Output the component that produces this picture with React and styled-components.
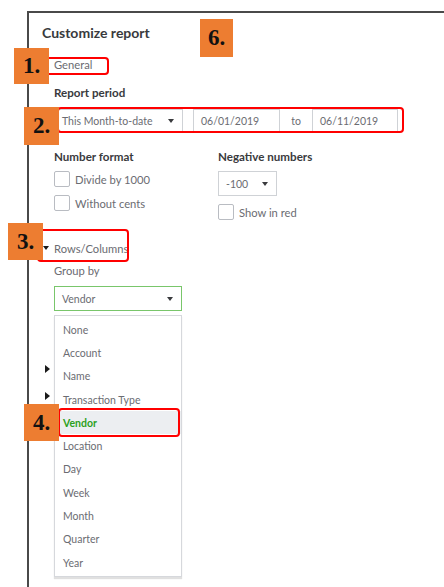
import React from "react";
import styled, { createGlobalStyle } from "styled-components";

const GlobalStyle = createGlobalStyle`
  body {
    margin: 0;
    background: #fff;
    font-family: Lato, "Noto Sans", sans-serif;
  }
`;

const Root = styled.div`
  position: relative;
  width: 444px;
  height: 587px;
  overflow: hidden;
  background: #fff;
`;

const Frame = styled.div`
  margin: 11px 0 0 27px;
  height: 576px;
  box-sizing: border-box;
  border-top: 2px solid #4a4a4a;
  border-left: 2px solid #4a4a4a;
  padding-left: 13px;
`;

const Title = styled.div`
  margin-top: 12px;
  font-size: 14px;
  line-height: 16px;
  font-weight: 700;
  color: #393a3d;
`;

const SectionHeader = styled.div`
  display: flex;
  align-items: center;
  height: 16px;
  margin-top: ${(p) => p.$gap}px;
  font-size: 11.2px;
  color: #6b6c72;
`;

const Marker = styled.span`
  width: 12px;
  height: 16px;
  display: flex;
  align-items: center;
  justify-content: ${(p) => (p.$kind === "dot" ? "flex-end" : "flex-start")};
  padding-left: 1px;
  box-sizing: border-box;

  &::before {
    content: "";
    display: block;
    ${(p) =>
      p.$kind === "dot"
        ? `width: 2px; height: 2px; background: #9a9ca1; margin-right: 5px;`
        : p.$kind === "down"
        ? `border-left: 3px solid transparent; border-right: 3px solid transparent; border-top: 4px solid #1a1a1a;`
        : `border-top: 4px solid transparent; border-bottom: 4px solid transparent; border-left: 5px solid #1a1a1a; margin-left: 2px;`}
  }
`;

const Body = styled.div`
  padding-left: 12px;
`;

const Label = styled.div`
  margin-top: ${(p) => p.$gap}px;
  font-size: ${(p) => (p.$bold ? 11.6 : 11.2)}px;
  line-height: 16px;
  font-weight: ${(p) => (p.$bold ? 700 : 400)};
  color: ${(p) => (p.$bold ? "#393a3d" : "#6b6c72")};
  white-space: nowrap;
`;

const FieldRow = styled.div`
  display: flex;
  height: 24px;
  margin-top: 8px;
`;

const Field = styled.div`
  box-sizing: border-box;
  width: ${(p) => p.$w}px;
  height: ${(p) => p.$h || 24}px;
  margin-top: ${(p) => p.$gap || 0}px;
  margin-left: ${(p) => p.$ml || 0}px;
  border: 1px solid ${(p) => (p.$active ? "#79c66b" : "#cfd2d6")};
  padding: 0 8px 0 7px;
  display: flex;
  align-items: center;
  justify-content: space-between;
  font-size: 10.5px;
  color: #6b6c72;
  background: #fff;
`;

const Arrow = styled.span`
  border-left: 3.5px solid transparent;
  border-right: 3.5px solid transparent;
  border-top: 4px solid #393a3d;
`;

const To = styled.div`
  width: 32px;
  display: flex;
  align-items: center;
  justify-content: center;
  font-size: 10.5px;
  color: #6b6c72;
`;

const Columns = styled.div`
  display: grid;
  grid-template-columns: 164px auto;
  align-items: start;
`;

const Column = styled.div`
  display: flex;
  flex-direction: column;
  align-items: flex-start;
`;

const CheckRow = styled.label`
  display: flex;
  align-items: center;
  gap: 5px;
  height: 16px;
  margin-top: ${(p) => p.$gap}px;
  font-size: 11.2px;
  color: #6b6c72;
`;

const Box = styled.span`
  width: 16px;
  height: 16px;
  box-sizing: border-box;
  border: 1px solid #b9bcc2;
  border-radius: 2px;
  background: #fff;
`;

const SelectWrap = styled.div`
  position: relative;
  width: 128px;
  margin-top: 7px;
`;

const Menu = styled.ul`
  position: absolute;
  top: calc(100% + 4px);
  left: 0;
  z-index: 2;
  width: 128px;
  margin: 0;
  padding: 2px 0;
  box-sizing: border-box;
  list-style: none;
  background: #fff;
  border: 1px solid #d6d8dc;
  box-shadow: 0 2px 1px rgba(0, 0, 0, 0.12);
`;

const MenuItem = styled.li`
  height: 23.3px;
  display: flex;
  align-items: center;
  padding-left: 8px;
  font-size: 10.5px;
  font-weight: ${(p) => (p.$selected ? 700 : 400)};
  color: ${(p) => (p.$selected ? "#2ca01c" : "#6b6c72")};
  background: ${(p) => (p.$selected ? "#eceef1" : "transparent")};
`;

const Badge = styled.div`
  position: absolute;
  left: ${(p) => p.$x}px;
  top: ${(p) => p.$y}px;
  width: ${(p) => p.$w || 35}px;
  height: ${(p) => p.$h || 37}px;
  z-index: 5;
  background: #ed7d31;
  display: flex;
  align-items: center;
  justify-content: center;
  font-family: "Liberation Serif", serif;
  font-weight: 700;
  font-size: 23px;
  color: #111;
`;

const Highlight = styled.div`
  position: absolute;
  left: ${(p) => p.$x}px;
  top: ${(p) => p.$y}px;
  width: ${(p) => p.$w}px;
  height: ${(p) => p.$h}px;
  z-index: 4;
  box-sizing: border-box;
  border: 2px solid #ff0000;
  border-radius: 4px;
`;

const groupOptions = [
  "None",
  "Account",
  "Name",
  "Transaction Type",
  "Vendor",
  "Location",
  "Day",
  "Week",
  "Month",
  "Quarter",
  "Year",
];

export default function App() {
  return (
    <Root>
      <GlobalStyle />
      <Frame>
        <Title>Customize report</Title>

        <SectionHeader $gap={15}>
          <Marker $kind="dot" />
          General
        </SectionHeader>
        <Body>
          <Label $bold $gap={13}>Report period</Label>
          <FieldRow>
            <Field $w={129}>
              This Month-to-date
              <Arrow />
            </Field>
            <Field $w={87} $ml={10}>06/01/2019</Field>
            <To>to</To>
            <Field $w={86}>06/11/2019</Field>
          </FieldRow>

          <Columns>
            <Column>
              <Label $bold $gap={16}>Number format</Label>
              <CheckRow $gap={6}>
                <Box />
                Divide by 1000
              </CheckRow>
              <CheckRow $gap={8}>
                <Box />
                Without cents
              </CheckRow>
            </Column>
            <Column>
              <Label $bold $gap={16}>Negative numbers</Label>
              <Field $w={59} $h={25} $gap={6}>
                -100
                <Arrow />
              </Field>
              <CheckRow $gap={8}>
                <Box />
                Show in red
              </CheckRow>
            </Column>
          </Columns>
        </Body>

        <SectionHeader $gap={20}>
          <Marker $kind="down" />
          Rows/Columns
        </SectionHeader>
        <Body>
          <Label $gap={7}>Group by</Label>
          <SelectWrap>
            <Field $w={128} $h={25} $active>
              Vendor
              <Arrow />
            </Field>
            <Menu>
              {groupOptions.map((opt) => (
                <MenuItem key={opt} $selected={opt === "Vendor"}>
                  {opt}
                </MenuItem>
              ))}
            </Menu>
          </SelectWrap>
        </Body>

        {/* collapsed sections hidden behind the open dropdown */}
        <SectionHeader $gap={50}>
          <Marker $kind="right" />
        </SectionHeader>
        <SectionHeader $gap={11}>
          <Marker $kind="right" />
        </SectionHeader>
      </Frame>

      <Highlight $x={42} $y={57} $w={67} $h={18} />
      <Highlight $x={57} $y={107} $w={347} $h={26} />
      <Highlight $x={37} $y={229} $w={92} $h={33} />
      <Highlight $x={58} $y={408} $w={122} $h={29} />

      <Badge $x={200} $y={19} $w={33} $h={38}>6.</Badge>
      <Badge $x={14} $y={48} $h={36}>1.</Badge>
      <Badge $x={24} $y={107} $h={38}>2.</Badge>
      <Badge $x={8} $y={223}>3.</Badge>
      <Badge $x={24} $y={404}>4.</Badge>
    </Root>
  );
}
